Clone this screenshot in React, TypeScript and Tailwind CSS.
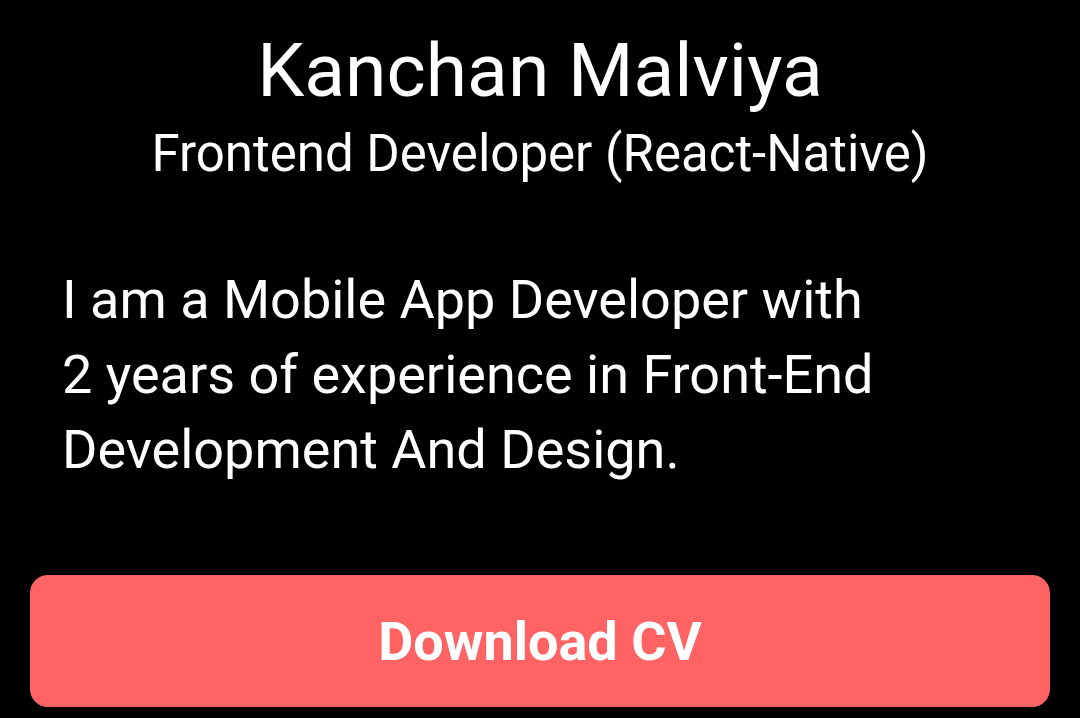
export default function App() {
  return (
    <div
      className="w-[1080px] h-[718px] bg-black text-white overflow-hidden flex flex-col"
      style={{ fontFamily: 'Roboto, "Noto Sans", sans-serif' }}
    >
      <div className="flex flex-col items-center pt-[26px]">
        <h1 className="text-[75px] leading-[88px] font-normal whitespace-nowrap">Kanchan Malviya</h1>
        <p className="text-[51px] leading-[60px] mt-[10px] whitespace-nowrap">Frontend Developer (React-Native)</p>
      </div>

      <p className="text-[54px] leading-[75px] px-[62px] mt-[78px] whitespace-nowrap">
        I am a Mobile App Developer with
        <br />
        2 years of experience in Front-End
        <br />
        Development And Design.
      </p>

      <div className="px-[30px] mt-[88px]">
        <button className="w-full h-[132px] rounded-[18px] bg-[#ff6363] flex items-center justify-center">
          <span className="text-[54px] font-bold">Download CV</span>
        </button>
      </div>
    </div>
  );
}
